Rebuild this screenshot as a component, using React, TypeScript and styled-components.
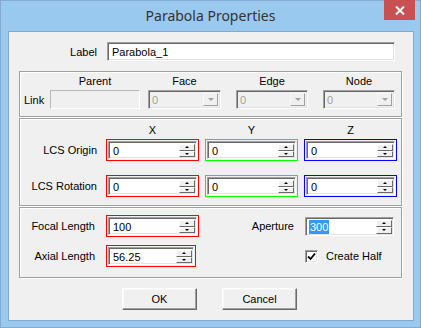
import styled, { createGlobalStyle } from 'styled-components';

const GlobalStyle = createGlobalStyle`
  html, body {
    margin: 0;
    padding: 0;
  }
  body {
    font-family: "Liberation Sans", Arial, sans-serif;
    font-size: 11px;
    color: #000;
    background: #f0f0f0;
  }
`;

const Window = styled.div`
  width: 421px;
  height: 328px;
  box-sizing: border-box;
  display: flex;
  flex-direction: column;
  background: #99c9ef;
  border: 1px solid #84acd3;
`;

const TitleBar = styled.div`
  height: 30px;
  flex: none;
  display: grid;
  grid-template-columns: 1fr auto 1fr;
  align-items: start;
`;

const Title = styled.div`
  grid-column: 2;
  align-self: center;
  padding-bottom: 2px;
  font-family: "Noto Sans", "Open Sans", sans-serif;
  font-size: 14px;
  color: #333;
`;

const CloseButton = styled.div`
  grid-column: 3;
  justify-self: end;
  width: 31px;
  height: 20px;
  margin: -1px 5px 0 0;
  background: #c75050;
  display: flex;
  align-items: center;
  justify-content: center;
`;

const Client = styled.div`
  flex: 1;
  margin: 0 6px 6px 7px;
  background: #f0f0f0;
  border: 1px solid #83a9d0;
  display: flex;
  flex-direction: column;
`;

const LabelRow = styled.div`
  display: flex;
  align-items: center;
  height: 19px;
  margin-top: 10px;
`;

const RowLabel = styled.div`
  width: 88px;
  margin-right: 10px;
  text-align: right;
`;

const Sunken = styled.div`
  box-sizing: border-box;
  border: 1px solid;
  border-color: #a0a0a0 #fff #fff #a0a0a0;
  box-shadow: inset 1px 1px 0 #696969, inset -1px -1px 0 #e3e3e3;
`;

const TextInput = styled(Sunken)<{ $w: number }>`
  width: ${p => p.$w}px;
  height: 19px;
  background: #fff;
  padding: 0 0 0 4px;
  display: flex;
  align-items: center;
`;

const Group = styled.div<{ $h: number; $mt: number }>`
  box-sizing: border-box;
  width: 383px;
  height: ${p => p.$h}px;
  margin: ${p => p.$mt}px 0 0 10px;
  border: 1px solid #a0a0a0;
  box-shadow: inset 1px 1px 0 #fff, 1px 1px 0 #fff;
`;

const LinkGrid = styled.div`
  display: grid;
  grid-template-columns: 26px 90px 8px 73px 15px 72px 15px 72px;
  grid-template-rows: 13px 19px;
  row-gap: 3px;
  padding: 2px 0 0 4px;
`;

const Cell = styled.div<{ $col: number; $center?: boolean }>`
  grid-column: ${p => p.$col};
  display: flex;
  align-items: center;
  justify-content: ${p => (p.$center ? 'center' : 'flex-start')};
`;

const DisabledField = styled.div`
  box-sizing: border-box;
  border: 1px solid;
  border-color: #b9b9b9 #fff #fff #b9b9b9;
  background: #f0f0f0;
  height: 19px;
  width: 100%;
`;

const Combo = styled(Sunken)`
  width: 100%;
  height: 19px;
  background: #f0f0f0;
  padding: 2px;
  display: flex;
  color: #a0a0a0;
`;

const ComboText = styled.div`
  flex: 1;
  display: flex;
  align-items: center;
  padding-left: 1px;
`;

const DropButton = styled.div`
  box-sizing: border-box;
  width: 15px;
  border: 1px solid;
  border-color: #f8f8f8 #a0a0a0 #a0a0a0 #f8f8f8;
  display: flex;
  align-items: center;
  justify-content: center;
`;

const DropArrow = styled.div`
  width: 0;
  height: 0;
  border-left: 3px solid transparent;
  border-right: 3px solid transparent;
  border-top: 3px solid #a0a0a0;
`;

const SpinGrid = styled.div<{ $mt: number }>`
  display: grid;
  grid-template-columns: 80px 93px 93px 93px;
  column-gap: 6px;
  margin-top: ${p => p.$mt}px;
`;

const ColHeader = styled.div`
  height: 13px;
  line-height: 13px;
  text-align: center;
`;

const SideLabel = styled.div`
  padding-right: 3px;
  text-align: right;
  align-self: center;
`;

const ColorFrame = styled.div<{ $color: string; $w: number }>`
  box-sizing: border-box;
  width: ${p => p.$w}px;
  height: 22px;
  padding: 1px;
  border: 1px solid ${p => p.$color};
`;

const EditBox = styled(Sunken)<{ $w?: number; $h?: number }>`
  width: ${p => (p.$w ? `${p.$w}px` : '100%')};
  height: ${p => (p.$h ? `${p.$h}px` : '100%')};
  background: #fff;
  padding: 2px 1px 1px 2px;
  display: flex;
`;

const EditText = styled.div`
  flex: 1;
  display: flex;
  align-items: center;
  padding-left: 2px;
`;

const Selected = styled.span`
  background: #3399ff;
  color: #fff;
  margin-left: -1px;
  padding: 0 1px;
  line-height: 14px;
`;

const SpinButtons = styled.div`
  width: 16px;
  display: flex;
  flex-direction: column;
`;

const SpinHalf = styled.div`
  flex: 1;
  box-sizing: border-box;
  background: #f0f0f0;
  border: 1px solid;
  border-color: #fff #696969 #696969 #fff;
  display: flex;
  align-items: center;
  justify-content: center;
`;

const SpinArrow = styled.div<{ $down?: boolean }>`
  width: 0;
  height: 0;
  border-left: 2px solid transparent;
  border-right: 2px solid transparent;
  ${p => (p.$down ? 'border-top: 2px solid #000;' : 'border-bottom: 2px solid #000;')}
`;

const ParamGrid = styled.div`
  display: grid;
  grid-template-columns: 86px 93px 106px 89px;
  grid-template-rows: 22px 22px;
  row-gap: 8px;
  padding-top: 7px;
`;

const ParamLabel = styled.div<{ $pr: number }>`
  padding-right: ${p => p.$pr}px;
  text-align: right;
  align-self: center;
`;

const CheckRow = styled.div`
  display: flex;
  align-items: center;
  gap: 8px;
`;

const CheckBox = styled(Sunken)`
  width: 13px;
  height: 13px;
  background: #fff;
  display: flex;
  align-items: center;
  justify-content: center;
`;

const ButtonRow = styled.div`
  display: flex;
  gap: 25px;
  margin: 10px 0 0 113px;
`;

const PushButton = styled.button`
  box-sizing: border-box;
  width: 75px;
  height: 22px;
  padding: 0;
  font: inherit;
  color: #000;
  background: #f0f0f0;
  border: 1px solid;
  border-color: #fff #696969 #696969 #fff;
  box-shadow: inset -1px -1px 0 #a0a0a0, inset 1px 1px 0 #f8f8f8;
`;

function Spin({ value }: { value: React.ReactNode }) {
  return (
    <EditBox>
      <EditText>{value}</EditText>
      <SpinButtons>
        <SpinHalf>
          <SpinArrow />
        </SpinHalf>
        <SpinHalf>
          <SpinArrow $down />
        </SpinHalf>
      </SpinButtons>
    </EditBox>
  );
}

function FramedSpin({ color, w = 93, value }: { color: string; w?: number; value: string }) {
  return (
    <ColorFrame $color={color} $w={w}>
      <Spin value={value} />
    </ColorFrame>
  );
}

function DisabledCombo() {
  return (
    <Combo>
      <ComboText>0</ComboText>
      <DropButton>
        <DropArrow />
      </DropButton>
    </Combo>
  );
}

export default function App() {
  return (
    <>
      <GlobalStyle />
      <Window>
        <TitleBar>
          <Title>Parabola Properties</Title>
          <CloseButton>
            <svg width="10" height="9" viewBox="0 0 10 9">
              <path d="M1 0.5 L9 8.5 M9 0.5 L1 8.5" stroke="#fff" strokeWidth="2" />
            </svg>
          </CloseButton>
        </TitleBar>
        <Client>
          <LabelRow>
            <RowLabel>Label</RowLabel>
            <TextInput $w={288}>Parabola_1</TextInput>
          </LabelRow>

          <Group $h={46} $mt={10}>
            <LinkGrid>
              <Cell $col={2} $center>Parent</Cell>
              <Cell $col={4} $center>Face</Cell>
              <Cell $col={6} $center>Edge</Cell>
              <Cell $col={8} $center>Node</Cell>
              <Cell $col={1}>Link</Cell>
              <Cell $col={2}><DisabledField /></Cell>
              <Cell $col={4}><DisabledCombo /></Cell>
              <Cell $col={6}><DisabledCombo /></Cell>
              <Cell $col={8}><DisabledCombo /></Cell>
            </LinkGrid>
          </Group>

          <Group $h={88} $mt={1}>
            <SpinGrid $mt={5}>
              <div />
              <ColHeader>X</ColHeader>
              <ColHeader>Y</ColHeader>
              <ColHeader>Z</ColHeader>
            </SpinGrid>
            <SpinGrid $mt={2}>
              <SideLabel>LCS Origin</SideLabel>
              <FramedSpin color="#ff0000" value="0" />
              <FramedSpin color="#00ff00" value="0" />
              <FramedSpin color="#0000ff" value="0" />
            </SpinGrid>
            <SpinGrid $mt={14}>
              <SideLabel>LCS Rotation</SideLabel>
              <FramedSpin color="#ff0000" value="0" />
              <FramedSpin color="#00ff00" value="0" />
              <FramedSpin color="#0000ff" value="0" />
            </SpinGrid>
          </Group>

          <Group $h={71} $mt={1}>
            <ParamGrid>
              <ParamLabel $pr={11}>Focal Length</ParamLabel>
              <FramedSpin color="#ff0000" value="100" />
              <ParamLabel $pr={11}>Aperture</ParamLabel>
              <EditBox $w={89} $h={19} style={{ alignSelf: 'center' }}>
                <EditText>
                  <Selected>300</Selected>
                </EditText>
                <SpinButtons>
                  <SpinHalf>
                    <SpinArrow />
                  </SpinHalf>
                  <SpinHalf>
                    <SpinArrow $down />
                  </SpinHalf>
                </SpinButtons>
              </EditBox>
              <ParamLabel $pr={11}>Axial Length</ParamLabel>
              <FramedSpin color="#ff0000" w={90} value="56.25" />
              <div />
              <CheckRow>
                <CheckBox>
                  <svg width="9" height="9" viewBox="0 0 9 9">
                    <path d="M1 4.5 L3.5 7 L8 1.5" stroke="#000" strokeWidth="1.8" fill="none" />
                  </svg>
                </CheckBox>
                <span>Create Half</span>
              </CheckRow>
            </ParamGrid>
          </Group>

          <ButtonRow>
            <PushButton>OK</PushButton>
            <PushButton>Cancel</PushButton>
          </ButtonRow>
        </Client>
      </Window>
    </>
  );
}
